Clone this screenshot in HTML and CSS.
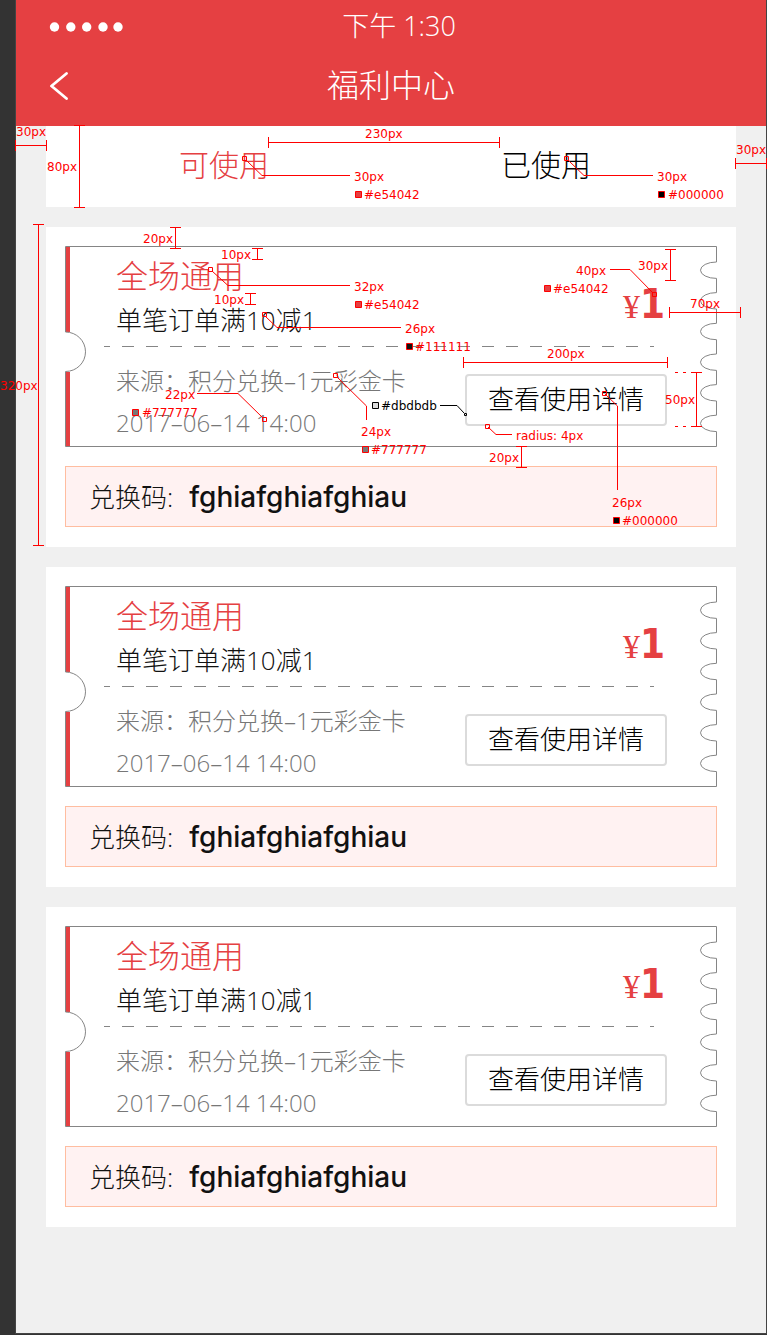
FILE: index.html
```html
<!DOCTYPE html>
<html lang="zh-CN">
<head>
<meta charset="utf-8">
<title>福利中心</title>
<link rel="stylesheet" href="styles.css">
</head>
<body>
<svg class="symbols" aria-hidden="true">
  <symbol id="edge-left" viewBox="0 0 22 201">
    <path d="M3 1V86M3 126V200" fill="none" stroke="#e54042" stroke-width="4"/>
    <path d="M22 .5H.5V86C11.500 86 20.500 94.800 20.500 105.800S11.500 125.500 .5 125.500V200.500H22" fill="none" stroke="#858585"/>
  </symbol>
  <symbol id="edge-right" viewBox="0 0 18 201">
    <path d="M0 .5H17.500V16A16 8.200 0 0 0 17.500 32.400V46.600A16 8.200 0 0 0 17.500 63V77.300A16 8.200 0 0 0 17.500 93.700V108A16 8.200 0 0 0 17.500 124.400V138.600A16 8.200 0 0 0 17.500 155V169.200A16 8.200 0 0 0 17.500 185.600V200.500H0" fill="none" stroke="#858585"/>
  </symbol>
</svg>

<div class="screen">
  <header class="header">
    <div class="status">
      <svg class="signal" width="74" height="12" viewBox="0 0 74 12" fill="#fff" aria-hidden="true"><circle cx="5.500" cy="7" r="4.700"/><circle cx="21.800" cy="7" r="4.700"/><circle cx="37.700" cy="7" r="4.700"/><circle cx="54" cy="7" r="4.700"/><circle cx="69" cy="7" r="4.700"/></svg>
      <span class="clock">下午 1:30</span>
    </div>
    <div class="bar">
      <button class="back" type="button" aria-label="返回"><svg width="20" height="30" viewBox="0 0 20 30" fill="none" stroke="#fff" stroke-width="2.800" stroke-linecap="round" stroke-linejoin="round"><path d="M18.500 3.500L3.500 16L18.500 28.500"/></svg></button>
      <h1 class="heading">福利中心</h1>
    </div>
  </header>

  <main class="content">
    <nav class="tabs">
      <button class="tab tab-active" type="button">可使用</button>
      <button class="tab" type="button">已使用</button>
    </nav>

    <article class="card">
      <div class="ticket">
        <svg class="edge edge-left"><use href="#edge-left"/></svg>
        <div class="body">
          <div class="upper">
            <div class="info">
              <h2 class="name">全场通用</h2>
              <p class="rule">单笔订单满10减1</p>
            </div>
            <p class="amount"><span class="yen">¥</span><span class="value">1</span></p>
          </div>
          <div class="divider"></div>
          <div class="lower">
            <div class="meta">
              <p class="line">来源：积分兑换–1元彩金卡</p>
              <p class="line">2017–06–14 14:00</p>
            </div>
            <button class="detail" type="button">查看使用详情</button>
          </div>
        </div>
        <svg class="edge edge-right"><use href="#edge-right"/></svg>
      </div>
      <p class="code"><span>兑换码:</span><strong class="number">fghiafghiafghiau</strong></p>
    </article>

    <article class="card">
      <div class="ticket">
        <svg class="edge edge-left"><use href="#edge-left"/></svg>
        <div class="body">
          <div class="upper">
            <div class="info">
              <h2 class="name">全场通用</h2>
              <p class="rule">单笔订单满10减1</p>
            </div>
            <p class="amount"><span class="yen">¥</span><span class="value">1</span></p>
          </div>
          <div class="divider"></div>
          <div class="lower">
            <div class="meta">
              <p class="line">来源：积分兑换–1元彩金卡</p>
              <p class="line">2017–06–14 14:00</p>
            </div>
            <button class="detail" type="button">查看使用详情</button>
          </div>
        </div>
        <svg class="edge edge-right"><use href="#edge-right"/></svg>
      </div>
      <p class="code"><span>兑换码:</span><strong class="number">fghiafghiafghiau</strong></p>
    </article>

    <article class="card">
      <div class="ticket">
        <svg class="edge edge-left"><use href="#edge-left"/></svg>
        <div class="body">
          <div class="upper">
            <div class="info">
              <h2 class="name">全场通用</h2>
              <p class="rule">单笔订单满10减1</p>
            </div>
            <p class="amount"><span class="yen">¥</span><span class="value">1</span></p>
          </div>
          <div class="divider"></div>
          <div class="lower">
            <div class="meta">
              <p class="line">来源：积分兑换–1元彩金卡</p>
              <p class="line">2017–06–14 14:00</p>
            </div>
            <button class="detail" type="button">查看使用详情</button>
          </div>
        </div>
        <svg class="edge edge-right"><use href="#edge-right"/></svg>
      </div>
      <p class="code"><span>兑换码:</span><strong class="number">fghiafghiafghiau</strong></p>
    </article>
  </main>
</div>

<!-- Spec annotations: dimension lines, callouts and colour chips -->
<svg class="specs" width="767" height="560" viewBox="0 0 767 560">
  <g class="rules">
    <path d="M15 145.500H46M15.500 140V151M46.500 140V151"/>
    <path d="M79.500 125V207M74 125.500H85M74 207.500H85"/>
    <path d="M268 142.500H500M268.500 137V148M499.500 137V148"/>
    <path d="M735 163.500H767M735.500 158V169M766.500 158V169"/>
    <path d="M38.500 224V545M33 224.500H44M33 545.500H44"/>
    <path d="M175.500 227V248M170 227.500H181M170 248.500H181"/>
    <path d="M257.500 248V259M252 248.500H263M252 259.500H263"/>
    <path d="M250.500 293V304M245 293.500H256M245 304.500H256"/>
    <path d="M670.500 249V280M665 249.500H676M665 280.500H676"/>
    <path d="M669 312.500H741M669.500 307V318M740.500 307V318"/>
    <path d="M463 362.500H668M463.500 357V368M667.500 357V368"/>
    <path d="M696.500 372V426M691 372.500H702M691 426.500H702"/>
    <path d="M675 372.500H691M675 426.500H691" stroke-dasharray="3 5"/>
    <path d="M521.500 446V467M516 446.500H527M516 467.500H527"/>
    <path d="M262 175.500H350M584 175.500H653M228 285.500H350M277 327.500H401M610 269.500H630M197 393.500H238M366.500 406V420M496 434.500H512M617.500 406V490"/>
  </g>
  <path class="leaders" d="M246 160L262 175.500M568 160L584 175.500M212 271L228 285.500M265 316L277 327.500M630 269.500L653 293M238 393.500L263 418M337 377L366.500 406M488 427L496 434.500M605 394L617.500 406"/>
  <g class="handles">
    <path d="M242.500 156.500h4v4h-4zM564.500 156.500h4v4h-4zM208.500 267.500h4v4h-4zM262.500 312.500h4v4h-4zM652.500 292.500h4v4h-4zM262.500 417.500h4v4h-4zM333.500 373.500h4v4h-4zM485.500 424.500h4v4h-4zM602.500 391.500h4v4h-4z"/>
  </g>
  <path class="handle-dark" d="M440 405.500H457L464 413M464.500 413.500h2v2h-2z"/>
  <g class="chips">
    <path fill="#e54042" d="M355.500 191.500h6v6h-6zM355.500 301.500h6v6h-6zM544.500 285.500h6v6h-6z"/>
    <path fill="#000" d="M658.500 191.500h6v6h-6zM613.500 517.500h6v6h-6z"/>
    <path fill="#111" d="M406.500 343.500h6v6h-6z"/>
    <path fill="#777" d="M132.500 409.500h6v6h-6zM362.500 446.500h6v6h-6z"/>
    <path fill="#dbdbdb" d="M372.500 402.500h6v6h-6z"/>
  </g>
  <g class="labels">
    <text x="16" y="136">30px</text>
    <text x="47" y="171">80px</text>
    <text x="365" y="138">230px</text>
    <text x="736" y="154">30px</text>
    <text x="354" y="181">30px</text>
    <text x="364" y="199">#e54042</text>
    <text x="657" y="181">30px</text>
    <text x="668" y="199">#000000</text>
    <text x="143" y="243">20px</text>
    <text x="221" y="259">10px</text>
    <text x="214" y="304">10px</text>
    <text x="354" y="291">32px</text>
    <text x="364" y="309">#e54042</text>
    <text x="405" y="333">26px</text>
    <text x="415" y="351">#111111</text>
    <text x="576" y="275">40px</text>
    <text x="553" y="293">#e54042</text>
    <text x="638" y="270">30px</text>
    <text x="690" y="308">70px</text>
    <text x="547" y="358">200px</text>
    <text x="0" y="390">320px</text>
    <text x="165" y="399">22px</text>
    <text x="142" y="417">#777777</text>
    <text x="361" y="436">24px</text>
    <text x="371" y="454">#777777</text>
    <text x="665" y="404">50px</text>
    <text x="516" y="440">radius: 4px</text>
    <text x="489" y="462">20px</text>
    <text x="612" y="507">26px</text>
    <text x="622" y="525">#000000</text>
    <text class="label-dark" x="381" y="410">#dbdbdb</text>
  </g>
</svg>
</body>
</html>
```

FILE: styles.css
```css
* {
  box-sizing: border-box;
}

body {
  position: relative;
  margin: 0;
  padding: 0 0 1px 15px;
  background: #333;
  font-family: "Open Sans", "Noto Sans CJK SC", sans-serif;
  font-weight: 300;
  color: #111;
}

h1,
h2,
p {
  margin: 0;
  font-weight: 300;
}

button {
  margin: 0;
  padding: 0;
  border: 0;
  background: none;
  font: inherit;
  color: inherit;
}

.symbols {
  position: absolute;
  width: 0;
  height: 0;
}

.screen {
  min-height: calc(100vh - 1px);
  border: solid #444;
  border-width: 0 1px 1px;
  background: #f0f0f0;
}

.header {
  padding-bottom: 8px;
  background: #e54042;
  color: #fff;
}

.status,
.bar {
  display: grid;
  grid-template-columns: 1fr auto 1fr;
  align-items: center;
}

.status {
  height: 52px;
  padding: 0 17px 0 33px;
}

.clock {
  font-size: 27px;
  line-height: 38px;
}

.bar {
  height: 66px;
  padding: 0 32px;
}

.back {
  justify-self: start;
  height: 30px;
}

.back svg {
  display: block;
}

.heading {
  font-size: 32px;
  line-height: 40px;
}

.content {
  display: flex;
  flex-direction: column;
  gap: 20px;
  padding: 0 30px;
}

.tabs {
  display: flex;
  justify-content: center;
  gap: 232px;
  height: 81px;
  padding: 0 12px 4px 0;
  background: #fff;
}

.tab {
  font-size: 30px;
  line-height: 40px;
  color: #000;
}

.tab-active {
  color: #e54042;
}

.card {
  display: grid;
  gap: 19px;
  padding: 19px 19px 20px;
  background: #fff;
}

.ticket {
  display: flex;
  height: 201px;
}

.edge {
  flex: none;
  height: 201px;
}

.edge-left {
  width: 22px;
}

.edge-right {
  width: 18px;
}

.body {
  flex: 1;
  border: solid #858585;
  border-width: 1px 0;
}

.upper {
  display: flex;
  justify-content: space-between;
  height: 99px;
  padding: 9px 34px 0 29px;
}

.info {
  display: grid;
  gap: 8px;
  align-content: start;
}

.name {
  font-size: 32px;
  line-height: 40px;
  color: #e54042;
}

.rule {
  font-size: 26px;
  line-height: 32px;
}

.amount {
  display: flex;
  align-items: baseline;
  padding-top: 28px;
  line-height: 40px;
  color: #e54042;
}

.yen {
  font-family: "Liberation Serif", serif;
  font-size: 34px;
}

.value {
  font-family: "DejaVu Sans Condensed", "DejaVu Sans", sans-serif;
  font-size: 40px;
  font-weight: 700;
}

.divider {
  height: 1px;
  margin: 0 45px 0 17px;
  background: repeating-linear-gradient(to right, #858585 0 6px, transparent 6px 18px, #858585 18px 24px);
}

.lower {
  display: flex;
  justify-content: space-between;
  padding: 18px 32px 0 29px;
}

.meta {
  display: grid;
  gap: 10px;
  align-content: start;
}

.line {
  font-size: 24px;
  line-height: 32px;
  color: #777;
}

.detail {
  width: 202px;
  height: 52px;
  margin-top: 9px;
  padding-bottom: 2px;
  border: 2px solid #dbdbdb;
  border-radius: 4px;
  font-size: 26px;
  line-height: 32px;
  color: #000;
}

.code {
  display: flex;
  align-items: center;
  gap: 16px;
  height: 61px;
  padding: 0 23px;
  border: 1px solid #ffbda0;
  background: #fff2f2;
  font-size: 26px;
  line-height: 32px;
}

.number {
  font-family: Inter, sans-serif;
  font-size: 28px;
  font-weight: 500;
}

.specs {
  position: absolute;
  top: 0;
  left: 0;
  pointer-events: none;
}

.rules path,
.leaders,
.handles path {
  fill: none;
  stroke: #f00;
}

.handle-dark {
  fill: none;
  stroke: #000;
}

.chips path {
  stroke: #f00;
}

.chips path:last-child {
  stroke: #000;
}

.labels {
  font-family: "DejaVu Sans", sans-serif;
  font-size: 12px;
  font-weight: 400;
  fill: #f00;
}

.label-dark {
  fill: #000;
}
```
